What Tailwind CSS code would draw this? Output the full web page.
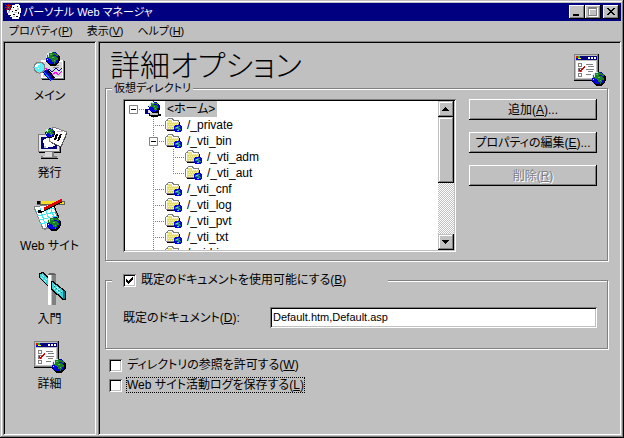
<!DOCTYPE html>
<html lang="ja">
  <head>
    <meta charset="UTF-8" />
    <meta name="viewport" content="width=device-width, initial-scale=1.0" />
    <title>パーソナル Web マネージャ</title>
    <script src="https://cdn.jsdelivr.net/npm/@tailwindcss/browser@4"></script>
  </head>
  <body class="bg-[#c0c0c0] text-black text-[12px] leading-4 font-['Liberation_Sans','Noto_Sans_CJK_JP',sans-serif] [font-feature-settings:'palt']">
    <!-- Shared icon parts -->
    <svg class="hidden" shape-rendering="crispEdges">
      <symbol id="globe" viewBox="0 0 15 15">
        <circle cx="8" cy="8" r="7" fill="#000" />
        <circle cx="7" cy="7" r="6.5" fill="#0000e0" />
        <path d="M1 5h1V3h2V1h4v1h3v1h2v2h-2v1h1v1h1v2h-2v2h-1v2H9v-2H7V9H6V8H4V7H1z" fill="#188020" />
        <path d="M3 11h3v1H3zM8 4h3v1H8z" fill="#0000e0" />
        <path d="M5 3h2v1H5zM7 6h2v1H7zM9 9h1v1H9z" fill="#58b858" />
        <path d="M1 4h1v3H1zM2 2h2v2H2zM3 4h1v2H3zM4 1h3v1H4zM2 8h1v1H2z" fill="#d8e8f0" />
      </symbol>
      <symbol id="folder" viewBox="0 0 17 16">
        <path d="M0 4h1V3h1V2h1V1h5v1h1v1h5v9h1v2H2v-1H1v-1H0z" fill="#808080" />
        <path d="M2 13h12V5h1v9H2z" fill="#000" />
        <path d="M1 4h2V2h4v1h1v1h5v8H1z" fill="#fff" />
        <path d="M2 5h11v7H2zM3 3h4v2H3z" fill="#e8e078" />
        <path d="M2.500 5.500h11M3.500 7.500h10M2.500 9.500h11M3.500 11.500h10" stroke="#f8f8b8" stroke-dasharray="1 1" />
        <path d="M2.500 6.500h11M3.500 8.500h10M2.500 10.500h11" stroke="#d8d060" stroke-dasharray="1 1" />
        <circle cx="13" cy="11.500" r="4" fill="#0000e0" />
        <path d="M10 10h2V9h3v1h-1v1h1v1h1v1h-2v1h-2v-1h1v-1h-3z" fill="#109070" />
        <path d="M11 10h2v1h-2zM12 13h2v1h-2z" fill="#60d0c0" />
      </symbol>
      <symbol id="tee" viewBox="0 0 20 16">
        <path d="M8.500 0v16M10 8.500h10" stroke="#808080" stroke-dasharray="1 1" />
      </symbol>
      <symbol id="elbow" viewBox="0 0 20 16">
        <path d="M8.500 0v9M10 8.500h10" stroke="#808080" stroke-dasharray="1 1" />
      </symbol>
      <symbol id="pipe" viewBox="0 0 20 16">
        <path d="M8.500 0v16" stroke="#808080" stroke-dasharray="1 1" />
      </symbol>
      <symbol id="minus" viewBox="0 0 20 16">
        <path d="M14 8.500h6" stroke="#808080" stroke-dasharray="1 1" />
        <path d="M4.500 4.500h8v8h-8z" fill="#fff" stroke="#808080" />
        <path d="M6 8.500h5" stroke="#000" />
      </symbol>
      <symbol id="options" viewBox="0 0 32 32">
        <path d="M0 0h25v27H0z" fill="#000" />
        <path d="M0 0h24v26H0z" fill="#808080" />
        <path d="M1 1h22v24H1z" fill="#c0c0c0" />
        <path d="M2 2h21v4H2z" fill="#000080" />
        <path d="M2 2h2v2H2z" fill="#f00" /><path d="M4 2h2v2H4z" fill="#0c0" />
        <path d="M2 4h2v2H2z" fill="#00f" /><path d="M4 4h3v1H4z" fill="#ff0" />
        <path d="M14 3h2v2h-2zM17 3h2v2h-2zM20 3h2v2h-2z" fill="#fff" />
        <path d="M2 7h20v17H2z" fill="#fff" />
        <path d="M4.500 9.500h3v3h-3zM4.500 14.500h3v3h-3zM4.500 19.500h3v3h-3z" fill="#fff" stroke="#808080" />
        <path d="M12 10.500h7M14 12.500h6M12 15.500h8M14 17.500h5M12 20.500h5" stroke="#808080" />
        <path d="M5 15h1v1h1v-1h1v-1h1v-1h1v-1h1v2h-1v1H9v1H8v1H7v1H6v-1H5z" fill="#d00000" />
        <use href="#globe" x="17" y="17" width="15" height="15" />
      </symbol>
    </svg>

    <!-- Window frame -->
    <div class="h-screen flex flex-col p-[3px] bg-[#c0c0c0] shadow-[inset_-1px_-1px_0_#000,inset_1px_1px_0_#c0c0c0,inset_-2px_-2px_0_#808080,inset_2px_2px_0_#fff]">
      <header class="flex items-center h-[18px] shrink-0 bg-[#000080] text-white pl-[2px] pr-[2px]">
        <svg class="size-4 shrink-0" viewBox="0 0 16 16" shape-rendering="crispEdges">
          <path d="M7 1h3V0h4v1h1v3h1v5h-1v4h-1v2H7v-2H5v-2H3V9H2V6h4V4h1z" fill="#fff" />
          <path d="M8 3h1v1H8zM12 2h1v1h-1zM7 7h1v1H7zM10 6h2v1h-2zM13 8h1v2h-1zM8 10h2v1H8zM11 12h2v1h-2zM5 11h1v1H5z" fill="#000" />
          <path d="M3 7h2v2H3zM12 4h2v2h-2zM8 12h2v1H8zM9 8h3v1H9z" fill="#c0c0c0" />
          <path d="M0 0h1v1h1v1h1V0h1v2h1V1h1v1H5v1h2v1H5v1h1v1H5v1H4V5H3v1H1V5h1V4H0V3h2V2H1V1H0z" fill="#e00000" />
          <path d="M3 3h1v1H3z" fill="#00c080" />
        </svg>
        <h2 class="flex-1 pl-[2px] text-[11px] whitespace-nowrap">パーソナル Web マネージャ</h2>
        <div class="flex">
          <button aria-label="最小化" class="w-4 h-[14px] bg-[#c0c0c0] shadow-[inset_-1px_-1px_0_#000,inset_1px_1px_0_#fff,inset_-2px_-2px_0_#808080]">
            <svg class="w-4 h-[14px]" viewBox="0 0 16 14" shape-rendering="crispEdges"><path d="M4 9h6v2H4z" /></svg>
          </button>
          <button aria-label="最大化" disabled class="w-4 h-[14px] bg-[#c0c0c0] shadow-[inset_-1px_-1px_0_#000,inset_1px_1px_0_#fff,inset_-2px_-2px_0_#808080]">
            <svg class="w-4 h-[14px]" viewBox="0 0 16 14" shape-rendering="crispEdges" fill="none">
              <path d="M4.500 4v7.500H12.500V3M4 4h9" stroke="#fff" />
              <path d="M3.500 3.500h8v7h-8zM3 2.500h9" stroke="#808080" />
            </svg>
          </button>
          <button aria-label="閉じる" class="ml-[2px] w-4 h-[14px] bg-[#c0c0c0] shadow-[inset_-1px_-1px_0_#000,inset_1px_1px_0_#fff,inset_-2px_-2px_0_#808080]">
            <svg class="w-4 h-[14px]" viewBox="0 0 16 14" shape-rendering="crispEdges"><path d="M4 3h2v1h1v1h2V4h1V3h2v1h-1v1h-1v1H9v1h1v1h1v1h1v1h-2V9H9V8H7v1H6v1H4V9h1V8h1V7h1V6H6V5H5V4H4z" /></svg>
          </button>
        </div>
      </header>

      <nav class="flex items-center h-5 shrink-0 pl-[6px] gap-[14px] text-[11px] whitespace-nowrap">
        <button>プロパティ(<u>P</u>)</button>
        <button>表示(<u>V</u>)</button>
        <button>ヘルプ(<u>H</u>)</button>
      </nav>

      <div class="flex flex-1 min-h-0 gap-[2px]">
        <!-- Sidebar -->
        <aside class="w-[93px] shrink-0 flex flex-col items-center gap-[18px] pt-[9px] shadow-[inset_1px_1px_0_#808080,inset_-1px_-1px_0_#fff,inset_2px_2px_0_#000]">
          <button class="flex flex-col items-center gap-1 mb-1">
            <svg class="w-9 h-[34px]" viewBox="0 0 36 34" shape-rendering="crispEdges">
              <path d="M10 11h23v19H10z" fill="#000" />
              <path d="M9 10h23v19H9z" fill="#808080" />
              <path d="M9 10h22v18H9z" fill="#fff" />
              <path d="M11 12h19v15H11z" fill="#d8d8d8" />
              <path d="M13 22l4-3 3 3 4-4 3 3 3-3" fill="none" stroke="#0000c0" />
              <path d="M13 18l3 2 4 5 4-3 2 3 4-4" fill="none" stroke="#f0f" />
              <path d="M19 15h8v1h-8zM21 17h6v1h-6z" fill="#909090" />
              <use href="#globe" x="13" y="1" width="15" height="15" />
              <path d="M14 21l7 8" stroke="#000" stroke-width="5" />
              <path d="M12 21l8 9" stroke="#0000c8" stroke-width="4" />
              <path d="M12 22l7 8" stroke="#0090f0" />
              <circle cx="7.500" cy="17.500" r="6" fill="#808080" />
              <circle cx="7.500" cy="17.500" r="5" fill="#60f0f8" />
              <path d="M4 14h4v1H4zM3 15h3v2H3zM6 18h1v1H6z" fill="#fff" />
            </svg>
            <span>メイン</span>
          </button>
          <button class="flex flex-col items-center gap-[5px]">
            <svg class="w-9 h-[34px]" viewBox="0 0 36 34" shape-rendering="crispEdges">
              <path d="M7 9h22v18H7z" fill="#000" />
              <path d="M6 8h22v18H6z" fill="#808080" />
              <path d="M7 9h20v16H7z" fill="#e8e8e8" />
              <path d="M9 11h16v12H9z" fill="#000080" />
              <path d="M11 14l4-2 7 1 1 7-9 2-2-3z" fill="#fff" />
              <path d="M12 20h2v2h-2zM17 14h1v1h-1z" fill="#c0c0c0" />
              <path d="M13 26h9v4h3v3H9v-3h4z" fill="#808080" />
              <path d="M13 26h7v5h-9v-1h2z" fill="#d8d8d8" /><path d="M9 32h17v1H9z" fill="#000" />
              <path d="M21 1l14 5-6 15-12-6z" fill="#fff" stroke="#808080" />
              <path d="M35 7l-6 14-11-5" fill="none" stroke="#404040" stroke-dasharray="2 1" />
              <path d="M25 8l-2 6M29 8l-3 7" stroke="#000" stroke-width="2" />
              <path d="M25 5h6v1h-6z" fill="#c0c0c0" />
              <use href="#globe" x="13" y="2" width="10" height="10" />
            </svg>
            <span>発行</span>
          </button>
          <button class="flex flex-col items-center gap-[5px]">
            <svg class="w-9 h-[34px]" viewBox="0 0 36 34" shape-rendering="crispEdges">
              <path d="M4 9l18-3 8 20-17 5z" fill="#808080" />
              <path d="M3 8l19-3 6 19-16 6z" fill="#fff" stroke="#808080" />
              <path d="M5 13l18-4M6 17l18-4M8 21l18-4M9 25l17-4M9 9l6 19M14 8l6 19M19 7l6 17" fill="none" stroke="#40e8f0" />
              <path d="M23 7l3 7 2 5" fill="none" stroke="#000" />
              <path d="M6 2h28v4H6z" fill="#606060" />
              <path d="M10 2h16v3H10zM28 3h5v2h-5z" fill="#f8e020" />
              <path d="M6 2h3v3H6z" fill="#000" />
              <path d="M11 12L31 2" stroke="#000" stroke-width="3" />
              <path d="M13 10L31 1" stroke="#e00000" stroke-width="3" />
              <path d="M7 11h4v3H7z" fill="#000" /><path d="M10 10h3v2h-3z" fill="#fff" />
              <use href="#globe" x="15" y="17" width="15" height="15" />
            </svg>
            <span>Web サイト</span>
          </button>
          <button class="flex flex-col items-center gap-[5px]">
            <svg class="w-9 h-[34px]" viewBox="0 0 36 34" shape-rendering="crispEdges">
              <path d="M7 1l4-1 9 8v8h-2L7 6z" fill="#000" />
              <path d="M8 2l3-1 6 7v6L8 6z" fill="#40d0d8" />
              <path d="M10 3l6 6M9 5l6 6" stroke="#b0ffff" stroke-dasharray="1 1" />
              <path d="M16 2l2-1h4l2 2v30h-8z" fill="#808080" />
              <path d="M16 3h3v30h-3z" fill="#fff" /><path d="M19 3h1v30h-1z" fill="#c0c0c0" />
              <path d="M17 1h5v1h2v1h-8V2h1z" fill="#606060" />
              <path d="M19 9h2l13 10v9h-3L19 18z" fill="#000" />
              <path d="M20 10l12 9v8L20 17z" fill="#40d0d8" />
              <path d="M31 19h2v8h-2z" fill="#008080" />
              <path d="M22 13l8 7M22 16l7 6" stroke="#b0ffff" stroke-dasharray="2 1" />
              <path d="M22 14l8 7" stroke="#008080" stroke-dasharray="1 2" />
            </svg>
            <span>入門</span>
          </button>
          <button class="flex flex-col items-center gap-[3px] -mt-1">
            <svg class="size-8" shape-rendering="crispEdges"><use href="#options" /></svg>
            <span>詳細</span>
          </button>
        </aside>

        <!-- Advanced options -->
        <main class="flex-1 min-w-0 pl-[7px] pr-[13px] shadow-[inset_1px_1px_0_#808080,inset_-1px_-1px_0_#fff,inset_2px_2px_0_#000]">
          <div class="flex justify-between items-start h-[39px] pt-[13px] pl-[5px] pr-[2px]">
            <h1 class="text-[30px] leading-6 font-light whitespace-nowrap">詳細オプション</h1>
            <svg class="size-8 shrink-0" shape-rendering="crispEdges"><use href="#options" /></svg>
          </div>

          <fieldset class="min-w-0 border border-[#808080] shadow-[1px_1px_0_#fff,inset_1px_1px_0_#fff] pt-[3px] pb-2 pl-[17px] pr-[10px]">
            <legend class="-ml-[11px] px-[2px] text-[11px] bg-[#c0c0c0]">仮想ディレクトリ</legend>
            <div class="flex gap-[13px]">
              <div class="flex flex-1 min-w-0 h-[153px] p-[2px] bg-white shadow-[inset_1px_1px_0_#808080,inset_-1px_-1px_0_#fff,inset_2px_2px_0_#000,inset_-2px_-2px_0_#c0c0c0]">
                <ul class="flex-1 min-w-0 overflow-hidden whitespace-nowrap" role="tree">
                  <li class="flex h-4">
                    <svg class="w-5 h-4"><use href="#minus" /></svg>
                    <svg class="w-5 h-4" viewBox="0 0 20 16" shape-rendering="crispEdges">
                      <path d="M4 10h10v3h2v2h-3v1H6v-1H4z" fill="#000" />
                      <path d="M5 12h8v2H5z" fill="#c0c0c0" /><path d="M0 8h4v5H0z" fill="#000080" /><path d="M3 9h5v3H3z" fill="#e0e0e0" />
                      <use href="#globe" x="3" y="0" width="12" height="12" />
                    </svg>
                    <span class="px-[2px] bg-[#c0c0c0]">&lt;ホーム&gt;</span>
                  </li>
                  <li class="flex h-4 pl-5">
                    <svg class="w-5 h-4"><use href="#tee" /></svg>
                    <svg class="w-[17px] h-4 mr-[5px]" shape-rendering="crispEdges"><use href="#folder" /></svg>
                    <span>/_private</span>
                  </li>
                  <li class="flex h-4 pl-5">
                    <svg class="w-5 h-4"><use href="#tee" /><use href="#minus" /></svg>
                    <svg class="w-[17px] h-4 mr-[5px]" shape-rendering="crispEdges"><use href="#folder" /></svg>
                    <span>/_vti_bin</span>
                  </li>
                  <li class="flex h-4 pl-5">
                    <svg class="w-5 h-4"><use href="#pipe" /></svg>
                    <svg class="w-5 h-4"><use href="#tee" /></svg>
                    <svg class="w-[17px] h-4 mr-[5px]" shape-rendering="crispEdges"><use href="#folder" /></svg>
                    <span>/_vti_adm</span>
                  </li>
                  <li class="flex h-4 pl-5">
                    <svg class="w-5 h-4"><use href="#pipe" /></svg>
                    <svg class="w-5 h-4"><use href="#elbow" /></svg>
                    <svg class="w-[17px] h-4 mr-[5px]" shape-rendering="crispEdges"><use href="#folder" /></svg>
                    <span>/_vti_aut</span>
                  </li>
                  <li class="flex h-4 pl-5">
                    <svg class="w-5 h-4"><use href="#tee" /></svg>
                    <svg class="w-[17px] h-4 mr-[5px]" shape-rendering="crispEdges"><use href="#folder" /></svg>
                    <span>/_vti_cnf</span>
                  </li>
                  <li class="flex h-4 pl-5">
                    <svg class="w-5 h-4"><use href="#tee" /></svg>
                    <svg class="w-[17px] h-4 mr-[5px]" shape-rendering="crispEdges"><use href="#folder" /></svg>
                    <span>/_vti_log</span>
                  </li>
                  <li class="flex h-4 pl-5">
                    <svg class="w-5 h-4"><use href="#tee" /></svg>
                    <svg class="w-[17px] h-4 mr-[5px]" shape-rendering="crispEdges"><use href="#folder" /></svg>
                    <span>/_vti_pvt</span>
                  </li>
                  <li class="flex h-4 pl-5">
                    <svg class="w-5 h-4"><use href="#tee" /></svg>
                    <svg class="w-[17px] h-4 mr-[5px]" shape-rendering="crispEdges"><use href="#folder" /></svg>
                    <span>/_vti_txt</span>
                  </li>
                  <li class="flex h-4 pl-5">
                    <svg class="w-5 h-4"><use href="#tee" /></svg>
                    <svg class="w-[17px] h-4 mr-[5px]" shape-rendering="crispEdges"><use href="#folder" /></svg>
                    <span>/cgi-bin</span>
                  </li>
                </ul>
                <!-- Scroll bar -->
                <div class="w-4 shrink-0 flex flex-col bg-[repeating-conic-gradient(#fff_0_25%,#c0c0c0_0_50%)] bg-[length:2px_2px]">
                  <button aria-label="上へ" class="size-4 bg-[#c0c0c0] shadow-[inset_-1px_-1px_0_#000,inset_1px_1px_0_#c0c0c0,inset_-2px_-2px_0_#808080,inset_2px_2px_0_#fff]">
                    <svg class="size-4" viewBox="0 0 16 16" shape-rendering="crispEdges"><path d="M7 6h1v1h1v1h1v1h1v1H4V9h1V8h1V7h1z" /></svg>
                  </button>
                  <div class="h-[66px] bg-[#c0c0c0] shadow-[inset_-1px_-1px_0_#000,inset_1px_1px_0_#c0c0c0,inset_-2px_-2px_0_#808080,inset_2px_2px_0_#fff]"></div>
                  <button aria-label="下へ" class="mt-auto size-4 bg-[#c0c0c0] shadow-[inset_-1px_-1px_0_#000,inset_1px_1px_0_#c0c0c0,inset_-2px_-2px_0_#808080,inset_2px_2px_0_#fff]">
                    <svg class="size-4" viewBox="0 0 16 16" shape-rendering="crispEdges"><path d="M4 6h7v1h-1v1H9v1H8v1H7V9H6V8H5V7H4z" /></svg>
                  </button>
                </div>
              </div>
              <div class="w-32 shrink-0 flex flex-col gap-3">
                <button class="h-[21px] shadow-[inset_-1px_-1px_0_#000,inset_1px_1px_0_#fff,inset_-2px_-2px_0_#808080]">追加(<u>A</u>)...</button>
                <button class="h-[21px] shadow-[inset_-1px_-1px_0_#000,inset_1px_1px_0_#fff,inset_-2px_-2px_0_#808080]">プロパティの編集(<u>E</u>)...</button>
                <button disabled class="h-[21px] text-[#808080] [text-shadow:1px_1px_0_#fff] shadow-[inset_-1px_-1px_0_#000,inset_1px_1px_0_#fff,inset_-2px_-2px_0_#808080]">削除(<u>R</u>)</button>
              </div>
            </div>
          </fieldset>

          <fieldset class="mt-[11px] min-w-0 border border-[#808080] shadow-[1px_1px_0_#fff,inset_1px_1px_0_#fff] pt-[19px] pb-5 pl-[17px] pr-[10px]">
            <legend class="-ml-[11px] pl-[11px] w-[276px] bg-[#c0c0c0]">
              <label class="flex items-center gap-[5px] whitespace-nowrap">
                <span class="relative size-[13px]">
                  <input type="checkbox" checked class="peer block appearance-none size-[13px] bg-white shadow-[inset_1px_1px_0_#808080,inset_-1px_-1px_0_#fff,inset_2px_2px_0_#000,inset_-2px_-2px_0_#c0c0c0]" />
                  <svg class="absolute inset-0 size-[13px] hidden peer-checked:block pointer-events-none" viewBox="0 0 13 13" shape-rendering="crispEdges"><path d="M3 5h1v1h1v1h1V6h1V5h1V4h1V3h1v3H9v1H8v1H7v1H6v1H5V9H4V8H3z" /></svg>
                </span>
                <span>既定のドキュメントを使用可能にする(<u>B</u>)</span>
              </label>
            </legend>
            <div class="flex items-center">
              <label for="doc" class="w-[147px] shrink-0 whitespace-nowrap">既定のドキュメント(<u>D</u>):</label>
              <input id="doc" type="text" value="Default.htm,Default.asp" class="flex-1 min-w-0 h-[21px] px-[3px] pb-[2px] text-[11px] bg-white shadow-[inset_1px_1px_0_#808080,inset_-1px_-1px_0_#fff,inset_2px_2px_0_#000,inset_-2px_-2px_0_#c0c0c0]" />
            </div>
          </fieldset>

          <div class="flex flex-col items-start gap-1 mt-2 pl-1 whitespace-nowrap">
            <label class="flex items-center gap-1">
              <input type="checkbox" class="appearance-none size-[13px] bg-white shadow-[inset_1px_1px_0_#808080,inset_-1px_-1px_0_#fff,inset_2px_2px_0_#000,inset_-2px_-2px_0_#c0c0c0]" />
              <span class="px-px">ディレクトリの参照を許可する(<u>W</u>)</span>
            </label>
            <label class="flex items-center gap-1">
              <input type="checkbox" class="appearance-none size-[13px] bg-white shadow-[inset_1px_1px_0_#808080,inset_-1px_-1px_0_#fff,inset_2px_2px_0_#000,inset_-2px_-2px_0_#c0c0c0]" />
              <span class="px-px outline-1 -outline-offset-1 outline-dotted outline-black">Web サイト活動ログを保存する(<u>L</u>)</span>
            </label>
          </div>
        </main>
      </div>
    </div>
  </body>
</html>
